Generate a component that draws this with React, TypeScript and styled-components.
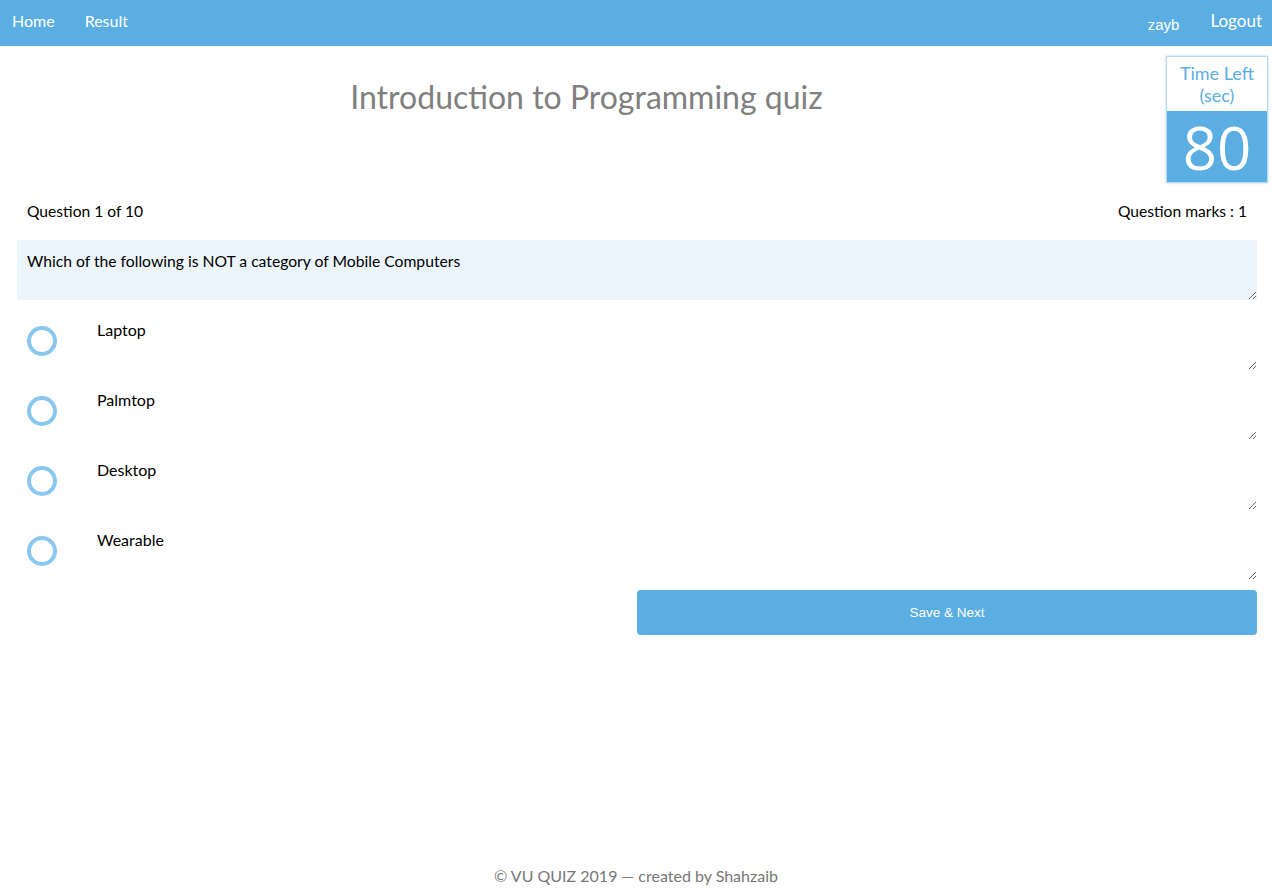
import React from "react";
import styled, { createGlobalStyle } from "styled-components";

const Global = createGlobalStyle`
  html, body { margin: 0; padding: 0; background: #fff; }
  body { font-family: Lato, "Liberation Sans", sans-serif; }
  * { box-sizing: border-box; }
`;

const Nav = styled.nav`
  height: 46px;
  background: #5aaee2;
  display: flex;
  align-items: center;
  padding: 0 10px 5px 12px;
`;

const NavLinks = styled.div`
  display: flex;
  gap: 30px;
  flex: 1;
`;

const NavLink = styled.a<{ $size?: number }>`
  color: #fff;
  text-decoration: none;
  font-family: Lato, sans-serif;
  font-size: ${(p) => p.$size ?? 16}px;
`;

const NavRight = styled.div`
  display: flex;
  align-items: center;
  gap: 31px;
`;

const User = styled.span`
  color: #fff;
  font-family: "Liberation Sans", Arial, sans-serif;
  font-size: 15px;
  padding-top: 7px;
`;

const Header = styled.div`
  display: flex;
  align-items: flex-start;
  padding: 10px 4px 0 0;
`;

const Title = styled.h1`
  flex: 1;
  margin: 0;
  padding: 21px 0 0 7px;
  text-align: center;
  font-weight: 400;
  font-size: 32px;
  color: #808080;
  font-family: Lato, sans-serif;
`;

const Timer = styled.div`
  width: 102px;
  border: 1px solid #b9dcf3;
  box-shadow: 0 0 2px rgba(90, 174, 226, 0.6);
  display: flex;
  flex-direction: column;
`;

const TimerLabel = styled.div`
  height: 54px;
  text-align: center;
  color: #5aaee2;
  font-size: 18px;
  line-height: 22px;
  padding-top: 5px;
`;

const TimerValue = styled.div`
  height: 71px;
  background: #5aaee2;
  color: #fff;
  font-size: 60px;
  line-height: 72px;
  text-align: center;
  font-family: "Open Sans", "Liberation Sans", sans-serif;
`;

const Main = styled.main`
  padding: 0 15px 0 17px;
`;

const MetaRow = styled.div`
  display: flex;
  justify-content: space-between;
  padding: 18px 10px 0 10px;
  font-size: 15.6px;
  color: #000;
  line-height: 20px;
`;

const QuestionBox = styled.textarea`
  display: block;
  width: 100%;
  height: 60px;
  margin-top: 19px;
  border: none;
  outline: none;
  background: #edf5fc;
  padding: 12px 10px 8px;
  font-family: Lato, sans-serif;
  font-size: 15.7px;
  color: #000;
  resize: vertical;
`;

const Options = styled.div`
  display: flex;
  flex-direction: column;
  margin-top: 10px;
`;

const OptionRow = styled.div`
  display: flex;
  align-items: flex-start;
  height: 70px;
`;

const Radio = styled.span`
  width: 30px;
  height: 30px;
  border-radius: 50%;
  border: 4px solid #8ac7ef;
  margin: 16px 30px 0 10px;
  flex: none;
`;

const OptionText = styled.textarea`
  flex: 1;
  height: 60px;
  border: none;
  outline: none;
  background: #fff;
  padding: 10px 10px;
  font-family: Lato, sans-serif;
  font-size: 16px;
  color: #000;
  resize: vertical;
`;

const Actions = styled.div`
  display: flex;
  justify-content: flex-end;
`;

const SaveButton = styled.button`
  width: 620px;
  height: 45px;
  background: #5aaee2;
  color: #fff;
  border: none;
  border-radius: 4px;
  font-family: "Liberation Sans", Arial, sans-serif;
  font-size: 13.5px;
`;

const Footer = styled.footer`
  text-align: center;
  color: #777;
  font-size: 16px;
  margin-top: 231px;
`;

const options = ["Laptop", "Palmtop", "Desktop", "Wearable"];

export default function App() {
  return (
    <>
      <Global />
      <Nav>
        <NavLinks>
          <NavLink href="#">Home</NavLink>
          <NavLink href="#">Result</NavLink>
        </NavLinks>
        <NavRight>
          <User>zayb</User>
          <NavLink href="#" $size={17}>Logout</NavLink>
        </NavRight>
      </Nav>
      <Header>
        <Title>Introduction to Programming quiz</Title>
        <Timer>
          <TimerLabel>
            Time Left
            <br />
            (sec)
          </TimerLabel>
          <TimerValue>80</TimerValue>
        </Timer>
      </Header>
      <Main>
        <MetaRow>
          <span>Question 1 of 10</span>
          <span>Question marks : 1</span>
        </MetaRow>
        <QuestionBox readOnly value="Which of the following is NOT a category of Mobile Computers" />
        <Options>
          {options.map((o) => (
            <OptionRow key={o}>
              <Radio />
              <OptionText readOnly value={o} />
            </OptionRow>
          ))}
        </Options>
        <Actions>
          <SaveButton>Save &amp; Next</SaveButton>
        </Actions>
      </Main>
      <Footer>© VU QUIZ 2019 — created by Shahzaib</Footer>
    </>
  );
}
